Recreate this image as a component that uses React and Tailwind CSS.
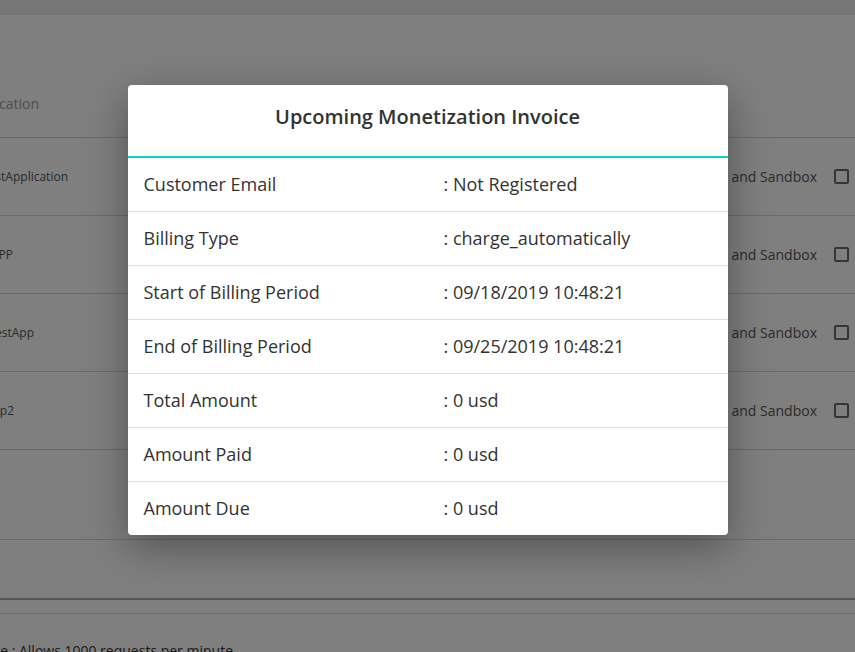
import React from 'react';

const apps = [
  { name: 'TestApplication', w: 'w-[68px]' },
  { name: 'MyAPP', w: 'w-[13px]' },
  { name: 'TestApp', w: 'w-[34px]' },
  { name: 'TestApp2', w: 'w-[14px]' },
];

const invoice = [
  ['Customer Email', 'Not Registered'],
  ['Billing Type', 'charge_automatically'],
  ['Start of Billing Period', '09/18/2019 10:48:21'],
  ['End of Billing Period', '09/25/2019 10:48:21'],
  ['Total Amount', '0 usd'],
  ['Amount Paid', '0 usd'],
  ['Amount Due', '0 usd'],
];

export default function App() {
  return (
    <div className="relative w-[855px] h-[652px] overflow-hidden bg-white font-['Open_Sans',sans-serif]">
      {/* page behind the dialog */}
      <div className="h-[15px] bg-[#eeeeee] border-b border-[#e4e4e4]" />
      <div className="h-[123px] flex items-end pb-[23px] border-b border-[#d4d4d4]">
        <div className="w-[39px] flex justify-end overflow-hidden whitespace-nowrap text-[14px] text-[#999]">Application</div>
      </div>
      {apps.map((a) => (
        <div key={a.name} className="h-[78px] flex items-center justify-between border-b border-[#d4d4d4] pr-[6px]">
          <div className={`${a.w} flex justify-end overflow-hidden whitespace-nowrap text-[12px] text-[#555]`}>{a.name}</div>
          <div className="flex items-center gap-[17px]">
            <span className="text-[14px] text-[#555]">Production and Sandbox</span>
            <span className="w-[15px] h-[15px] border-2 border-[#6a6a6a] rounded-[2px] bg-white" />
          </div>
        </div>
      ))}
      <div className="h-[90px] border-b border-[#d4d4d4]" />
      <div className="h-[60px] border-b-2 border-[#aaaaaa]" />
      <div className="h-[14px] border-b border-[#d8d8d8]" />
      <div className="pt-[26px] w-[233px] flex justify-end overflow-hidden whitespace-nowrap text-[14px] text-[#333]">Rate Limiting Size : Allows 1000 requests per minute</div>

      {/* overlay + dialog */}
      <div className="absolute inset-0 bg-black/50 flex justify-center pt-[85px]">
        <div className="w-[600px] h-[450px] bg-white rounded-[4px] shadow-[0_12px_40px_rgba(0,0,0,0.35)] overflow-hidden">
          <div className="h-[73px] flex items-center justify-center border-b-2 border-[#00d4cc]">
            <h2 className="text-[20px] font-semibold text-[#333] -mt-[7px]">Upcoming Monetization Invoice</h2>
          </div>
          {invoice.map(([label, value], i) => (
            <div key={label} className={`grid grid-cols-2 items-center text-[18px] text-[#333] ${i < invoice.length - 1 ? 'h-[54px] border-b border-[#dddddd]' : 'h-[53px]'}`}>
              <div className="px-[16px]">{label}</div>
              <div className="px-[16px]">: {value}</div>
            </div>
          ))}
        </div>
      </div>
    </div>
  );
}
